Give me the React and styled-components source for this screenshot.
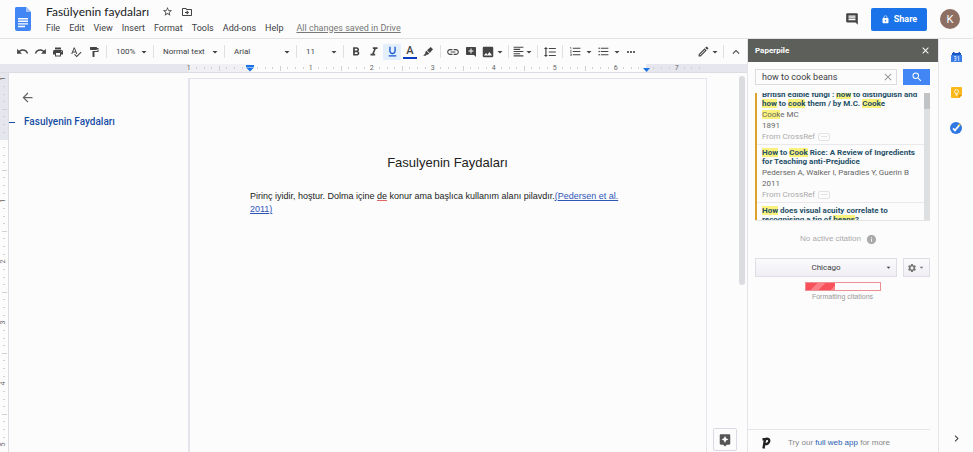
import { useEffect, useRef } from "react";
import styled, { createGlobalStyle } from "styled-components";
import {
  MdAddComment,
  MdArrowBack,
  MdArrowDropDown,
  MdAssistant,
  MdChevronRight,
  MdClose,
  MdComment,
  MdFormatAlignLeft,
  MdFormatBold,
  MdFormatItalic,
  MdFormatLineSpacing,
  MdFormatListBulleted,
  MdFormatListNumbered,
  MdFormatPaint,
  MdFormatUnderlined,
  MdImage,
  MdInfo,
  MdKeyboardArrowUp,
  MdLink,
  MdLock,
  MdMoreHoriz,
  MdOutlineDriveFileMove,
  MdOutlineEdit,
  MdPrint,
  MdRedo,
  MdSearch,
  MdSettings,
  MdSpellcheck,
  MdStarBorder,
  MdUndo,
} from "react-icons/md";

const GlobalStyle = createGlobalStyle`
  * {
    box-sizing: border-box;
  }

  body {
    margin: 0;
    background: #fcfcfc;
    font-family: Roboto, "Liberation Sans", sans-serif;
    color: #3c4043;
  }

  button, input, select {
    margin: 0;
    padding: 0;
    border: 0;
    background: none;
    font: inherit;
    color: inherit;
  }

  svg {
    display: block;
    flex: none;
  }
`;

const Layout = styled.div`
  display: flex;
  flex-direction: column;
  height: 100vh;
  overflow: hidden;
`;

/* Header */

const Header = styled.header`
  display: flex;
  align-items: center;
  height: 39px;
  padding: 0 13px 0 14px;
  border-bottom: 1px solid #e3e3e6;
`;

const HeaderInfo = styled.div`
  flex: 1;
  padding-left: 14px;
`;

const TitleRow = styled.div`
  display: flex;
  align-items: center;
  gap: 8px;
  height: 18px;
`;

const FileName = styled.h1`
  margin: 0 5px 0 0;
  font-family: Lato, Roboto, sans-serif;
  font-size: 12px;
  font-weight: 400;
  line-height: 18px;
  color: #202124;
`;

const IconButton = styled.button`
  display: flex;
  align-items: center;
  justify-content: center;
  color: #444;
`;

const MenuRow = styled.nav`
  display: flex;
  align-items: center;
  gap: 9px;
  font-size: 9px;
  line-height: 15px;
`;

const SavedLink = styled.a`
  margin-left: 4px;
  color: #777;
`;

const ShareButton = styled.button`
  display: flex;
  align-items: center;
  justify-content: center;
  gap: 4px;
  width: 56px;
  height: 23px;
  margin: 0 13px 0 12px;
  border-radius: 2px;
  background: #1a73e8;
  color: #fff;
  font-size: 9px;
  font-weight: 700;
`;

const Avatar = styled.button`
  width: 20px;
  height: 20px;
  border-radius: 50%;
  background: #8d6e63;
  color: #fff;
  font-size: 11px;
`;

/* Workspace */

const Workspace = styled.div`
  display: flex;
  flex: 1;
  min-height: 0;
`;

const Editor = styled.main`
  position: relative;
  display: flex;
  flex: 1;
  flex-direction: column;
  min-width: 0;
`;

const Toolbar = styled.div`
  display: flex;
  align-items: center;
  height: 25px;
  padding: 0 2px 0 13px;
`;

const Tool = styled.button`
  display: flex;
  align-items: center;
  justify-content: center;
  width: ${(p) => p.$width || 18}px;
  height: 16px;
  color: ${(p) => (p.$active ? "#1558d6" : "#444")};
  background: ${(p) => (p.$active ? "#e3f0fb" : "none")};
`;

const Divider = styled.span`
  width: 1px;
  height: 13px;
  margin: 0 3px;
  background: #e0e0e3;
`;

const Spacer = styled.span`
  flex: 1;
`;

const Picker = styled.label`
  display: grid;
  align-items: center;
  justify-items: end;
  width: ${(p) => p.$width}px;
  font-size: 8px;

  select,
  svg {
    grid-area: 1 / 1;
  }

  select {
    width: 100%;
    height: 16px;
    padding-left: 6px;
    appearance: none;
  }

  svg {
    pointer-events: none;
  }
`;

const TextColor = styled.span`
  width: 14px;
  border-bottom: 2px solid #0b3cc1;
  font-size: 11px;
  font-weight: 500;
  line-height: 13px;
`;

/* Rulers */

const shade = "#e6e6ee";
const sheet = "#fcfcfc";

const Ruler = styled.div`
  display: flex;
  height: 9px;
  padding-left: 185px;
  overflow: hidden;
  background: ${shade};
  border-bottom: 1px solid #dcdce2;
`;

const SideRuler = styled.div`
  display: flex;
  flex: none;
  flex-direction: column;
  width: 9px;
  overflow: hidden;
  padding-top: 2px;
  background: ${shade};
  border-right: 1px solid #dcdce2;
`;

const Inch = styled.div`
  display: flex;
  flex: none;
  flex-direction: ${(p) => (p.$vertical ? "column" : "row")};
  width: ${(p) => (p.$vertical ? "auto" : "61px")};
  height: ${(p) => (p.$vertical ? "61px" : "auto")};
  background: ${(p) => p.$fill || sheet};
`;

const HalfInch = styled(Inch)`
  width: 30px;
`;

const Slot = styled.span`
  display: flex;
  flex: 1;
  align-items: center;
  justify-content: center;
  min-width: 0;
  min-height: 0;
  font-size: 7px;
  line-height: 7px;
  color: #666;

  b {
    font-weight: 400;
    transform: ${(p) => (p.$vertical ? "rotate(-90deg)" : "none")};
  }

  i {
    width: ${(p) => (p.$vertical ? p.$length : 1)}px;
    height: ${(p) => (p.$vertical ? 1 : p.$length)}px;
    background: #d0d0d6;
  }
`;

/* Document */

const Canvas = styled.div`
  display: flex;
  flex: 1;
  min-height: 0;
`;

const Outline = styled.aside`
  flex: none;
  width: 179px;
  padding-top: 17px;
`;

const BackButton = styled(IconButton)`
  margin-left: 11px;
  color: #666;
`;

const OutlineItem = styled.a`
  display: flex;
  align-items: center;
  gap: 9px;
  margin-top: 9px;
  color: #174ea6;
  font-size: 10px;
  font-weight: 500;
  line-height: 16px;
  text-decoration: none;

  &::before {
    content: "";
    width: 6px;
    height: 1px;
    background: #174ea6;
  }
`;

const Page = styled.article`
  flex: 0 1 519px;
  margin-top: 5px;
  padding: 74px 61px 0 60px;
  border: 1px solid #e4e4ec;
  border-width: 1px 1px 0 2px;
  font-family: "Liberation Sans", Arial, sans-serif;
  color: #222;
`;

const DocTitle = styled.h2`
  margin: 0;
  font-size: 13px;
  font-weight: 400;
  line-height: 20px;
  text-align: center;
`;

const Paragraph = styled.p`
  margin: 17px 0 0;
  font-size: 9px;
  line-height: 13px;

  a {
    color: #2f55b8;
  }

  u {
    text-decoration-color: #e06666;
  }
`;

const DocScroll = styled.div`
  width: 6px;
  height: 209px;
  margin: 3px 2px 0 auto;
  border-radius: 3px;
  background: #dadce0;
`;

const ExploreButton = styled(IconButton)`
  position: absolute;
  right: 10px;
  bottom: 1px;
  width: 24px;
  height: 23px;
  border: 1px solid #dadae2;
  border-radius: 2px;
  background: #fcfcfc;
  color: #555;
`;

/* Paperpile panel */

const Panel = styled.aside`
  display: flex;
  flex: none;
  flex-direction: column;
  width: 192px;
  border: 1px solid #e4e4ea;
  border-width: 0 1px;
  font-family: "Liberation Sans", Arial, sans-serif;
`;

const PanelHeader = styled.div`
  display: flex;
  align-items: center;
  justify-content: space-between;
  height: 23px;
  padding: 0 7px;
  background: #5d5f5b;
  color: #fff;
  font-family: Roboto, sans-serif;

  h2 {
    margin: 0;
    font-size: 8px;
    font-weight: 700;
  }

  button {
    color: #fff;
  }
`;

const PanelBody = styled.div`
  display: flex;
  flex: 1;
  flex-direction: column;
  padding: 7px 8px 0 7px;
`;

const SearchForm = styled.form`
  display: flex;
  gap: 6px;
`;

const SearchBox = styled.div`
  display: flex;
  flex: 1;
  align-items: center;
  height: 16px;
  padding: 0 2px 0 6px;
  border: 1px solid #dcdce0;
  font-family: Roboto, sans-serif;

  input {
    flex: 1;
    min-width: 0;
    font-size: 9px;
    outline: none;
  }

  button {
    color: #999;
  }
`;

const SearchButton = styled(IconButton)`
  width: 27px;
  background: #4285f4;
  color: #fff;
`;

const Results = styled.div`
  display: flex;
  height: 128px;
  margin-top: 8px;
  border-bottom: 1px solid #e4e4e4;
`;

const ResultList = styled.ul`
  flex: 1;
  min-width: 0;
  margin: 0;
  padding: 0;
  overflow: hidden;
  border-left: 2px solid #dba32c;
  list-style: none;
`;

const Result = styled.li`
  height: 58px;
  padding: 3px 0 0 5px;
  border-bottom: 1px solid #e9e9ec;
  font-family: Roboto, sans-serif;
  font-size: 8px;
  line-height: 11px;
  color: #666;
  white-space: nowrap;

  h3 {
    margin: 0 0 1px;
    font-size: 8px;
    line-height: 9px;
    color: #1f5068;
  }

  mark {
    background: #fbf27c;
    color: inherit;
  }
`;

const Source = styled.div`
  display: flex;
  align-items: center;
  gap: 3px;
  color: #aaa;

  button {
    width: 12px;
    height: 8px;
    border: 1px solid #e2e2e2;
    border-radius: 2px;
    line-height: 3px;
  }
`;

const ResultScroll = styled.div`
  width: 6px;
  background: #dddfe0;

  &::before {
    content: "";
    display: block;
    height: 16px;
    background: #c1c3c4;
  }
`;

const CitationStatus = styled.p`
  display: flex;
  align-items: center;
  justify-content: center;
  gap: 5px;
  margin: 12px 0 13px;
  padding-right: 8px;
  font-size: 8px;
  line-height: 12px;
  color: #aaa;
`;

const StyleRow = styled.div`
  display: flex;
  gap: 6px;
  font-family: Roboto, sans-serif;
`;

const StylePicker = styled(Picker)`
  flex: 1;
  height: 19px;
  border: 1px solid #e0dde4;
  background: linear-gradient(#fafafc, #f0eef4);

  select {
    padding: 0 8px 0 8px;
    text-align: center;
    text-align-last: center;
  }

  svg {
    margin-right: 3px;
  }
`;

const GearButton = styled(IconButton)`
  width: 27px;
  border: 1px solid #e0dde4;
  background: linear-gradient(#fafafc, #f0eef4);
  color: #777;
`;

const Progress = styled.div`
  width: 76px;
  height: 9px;
  margin: 5px auto 0;
  border: 1px solid #ee8f95;

  &::before {
    content: "";
    display: block;
    width: 40%;
    height: 100%;
    background: repeating-linear-gradient(
      135deg,
      #f7525c 0 8px,
      #fa7f86 8px 14px
    );
  }
`;

const ProgressLabel = styled.p`
  margin: 1px 0 0;
  font-size: 7px;
  line-height: 9px;
  text-align: center;
  color: #999;
`;

const PanelFooter = styled.footer`
  display: flex;
  align-items: center;
  gap: 17px;
  height: 23px;
  margin: 0 8px 0 0;
  padding: 3px 0 0 13px;
  border-top: 1px solid #e4e4ea;
  font-size: 8px;
  color: #888;

  a {
    color: #2a5db0;
    text-decoration: none;
  }
`;

const Rail = styled.nav`
  display: flex;
  flex: none;
  flex-direction: column;
  align-items: center;
  gap: 24px;
  width: 34px;
  padding: 13px 0 7px;
`;

const RailToggle = styled(IconButton)`
  margin-top: auto;
`;

const menus = ["File", "Edit", "View", "Insert", "Format", "Tools", "Add-ons", "Help"];
const inches = ["1", "", "1", "2", "3", "4", "5", "6"];
const sideInches = ["1", "", "1", "2", "3", "4", "5"];

// margins are tinted up to the middle of the slot that holds the marker
const inchFills = {
  0: `linear-gradient(to right, ${shade} 4px, #f0f0f5 4px)`,
  1: `linear-gradient(to right, #f0f0f5 4px, ${sheet} 4px)`,
  7: `linear-gradient(to right, ${sheet} 34px, ${shade} 34px)`,
};
const sideFills = {
  0: shade,
  1: `linear-gradient(${shade} 4px, ${sheet} 4px)`,
};

function DocsLogo() {
  return (
    <svg width="18" height="24" viewBox="0 0 18 24" aria-hidden="true">
      <path d="M2 0h10l5 5v17a2 2 0 0 1-2 2H3a2 2 0 0 1-2-2V2a2 2 0 0 1 1-2z" fill="#4285f4" />
      <path d="M12 0l5 5h-5z" fill="#a1c2fa" />
      <path d="M4 11h10v1.400H4zM4 13.600h10V15H4zM4 16.200h10v1.400H4zM4 18.800h7v1.400H4z" fill="#fff" />
    </svg>
  );
}

function HighlighterIcon() {
  return (
    <svg width="12" height="12" viewBox="0 0 12 12" fill="#444" aria-hidden="true">
      <path d="M8.600.900 11 3.300 7.800 7 5 4.200z" />
      <path d="M4.400 4.800 7.200 7.600 5.800 8.700 4.900 8.600 3.700 9.800H1.200L3.400 7.200 3.300 6.100z" />
    </svg>
  );
}

function CalendarIcon() {
  return (
    <svg width="11" height="11" viewBox="0 0 11 11" aria-hidden="true">
      <path d="M1 1h1V0h1.500v1h4V0H9v1h1v2H1z" fill="#1a56c4" />
      <path d="M0 3h11v7H0z" fill="#3b7de8" />
      <path
        d="M3 4.500h2v1.900H3.600M5 6.400v2.200H3M6.500 5 7.700 4.500V9"
        fill="none"
        stroke="#d8e6ff"
        strokeWidth=".8"
      />
    </svg>
  );
}

function KeepIcon() {
  return (
    <svg width="11" height="11" viewBox="0 0 11 11" aria-hidden="true">
      <path d="M1 0h9a1 1 0 0 1 1 1v7l-3 3H1a1 1 0 0 1-1-1V1a1 1 0 0 1 1-1z" fill="#fbb81b" />
      <path d="M11 8l-3 3V8z" fill="#e08f00" />
      <circle cx="5.500" cy="4.500" r="2" fill="none" stroke="#fff3cf" />
      <path d="M4.500 7h2v1.500h-2z" fill="#fff3cf" />
    </svg>
  );
}

function TasksIcon() {
  return (
    <svg width="12" height="12" viewBox="0 0 12 12" aria-hidden="true">
      <circle cx="6" cy="6" r="6" fill="#2f78e4" />
      <path d="M3 6.300 5 8.300 9.500 3" fill="none" stroke="#fff" strokeWidth="1.800" />
      <circle cx="9.600" cy="2.700" r="1" fill="#fbbc04" />
    </svg>
  );
}

function PaperpileLogo() {
  return (
    <svg width="10" height="14" viewBox="0 0 10 14" aria-hidden="true">
      <path
        d="M2.500 12.500 4 3.500C5.800 2.300 8.500 2.600 8.200 5.200 7.900 7.700 5.800 8.400 3.400 8M1.500 3.200h3"
        fill="none"
        stroke="#222"
        strokeWidth="2.400"
      />
    </svg>
  );
}

function IndentMarker() {
  return (
    <svg width="8" height="8" viewBox="0 0 8 8" aria-hidden="true">
      <path d="M0 1h8v2H0zM0 3.500h8L4 7.500z" fill="#1a73e8" />
    </svg>
  );
}

function RightMarker() {
  return (
    <svg width="7" height="8" viewBox="0 0 7 8" aria-hidden="true">
      <path d="M0 4h7L3.500 8z" fill="#1a73e8" />
    </svg>
  );
}

function Slots({ label, marker, rightMarker, vertical, count = 8 }) {
  return Array.from({ length: count }, (_, i) => (
    <Slot key={i} $vertical={vertical} $length={i === 4 ? 5 : 2}>
      {i === 0 && marker}
      {i === 4 && rightMarker}
      {i === 0 && !marker && label && <b>{label}</b>}
      {i > 0 && !(i === 4 && rightMarker) && <i />}
    </Slot>
  ));
}

function ToolPicker({ label, value, width }) {
  return (
    <Picker $width={width}>
      <select aria-label={label}>
        <option>{value}</option>
      </select>
      <MdArrowDropDown size={12} />
    </Picker>
  );
}

function DropTool({ label }) {
  return (
    <Tool $width={10} aria-label={label}>
      <MdArrowDropDown size={12} />
    </Tool>
  );
}

function EditorToolbar() {
  return (
    <Toolbar>
      <Tool aria-label="Undo"><MdUndo size={13} /></Tool>
      <Tool aria-label="Redo"><MdRedo size={13} /></Tool>
      <Tool aria-label="Print"><MdPrint size={12} /></Tool>
      <Tool aria-label="Spelling"><MdSpellcheck size={12} /></Tool>
      <Tool aria-label="Paint format"><MdFormatPaint size={12} /></Tool>
      <Divider />
      <ToolPicker label="Zoom" value="100%" width={40} />
      <Divider />
      <ToolPicker label="Styles" value="Normal text" width={64} />
      <Divider />
      <ToolPicker label="Font" value="Arial" width={65} />
      <Divider />
      <ToolPicker label="Font size" value="11" width={40} />
      <Divider />
      <Tool aria-label="Bold"><MdFormatBold size={14} /></Tool>
      <Tool aria-label="Italic"><MdFormatItalic size={14} /></Tool>
      <Tool aria-label="Underline" $active><MdFormatUnderlined size={13} /></Tool>
      <Tool aria-label="Text color"><TextColor>A</TextColor></Tool>
      <Tool aria-label="Highlight color"><HighlighterIcon /></Tool>
      <Divider />
      <Tool aria-label="Insert link"><MdLink size={14} /></Tool>
      <Tool aria-label="Add comment"><MdAddComment size={12} /></Tool>
      <Tool aria-label="Insert image" $width={15}><MdImage size={14} /></Tool>
      <DropTool label="Image options" />
      <Divider />
      <Tool aria-label="Align" $width={12}><MdFormatAlignLeft size={13} /></Tool>
      <DropTool label="Align options" />
      <Divider />
      <Tool aria-label="Line spacing"><MdFormatLineSpacing size={14} /></Tool>
      <Divider />
      <Tool aria-label="Numbered list"><MdFormatListNumbered size={13} /></Tool>
      <DropTool label="Numbered list options" />
      <Tool aria-label="Bulleted list"><MdFormatListBulleted size={13} /></Tool>
      <DropTool label="Bulleted list options" />
      <Tool aria-label="More"><MdMoreHoriz size={12} /></Tool>
      <Spacer />
      <Tool aria-label="Editing mode" $width={14}><MdOutlineEdit size={13} /></Tool>
      <DropTool label="Mode options" />
      <Divider />
      <Tool aria-label="Hide the menus"><MdKeyboardArrowUp size={14} /></Tool>
    </Toolbar>
  );
}

function SearchResults() {
  const list = useRef(null);

  // the list is already scrolled a little past the first title
  useEffect(() => {
    list.current.scrollTop = 6;
  }, []);

  return (
    <Results>
      <ResultList ref={list}>
        <Result>
          <h3>
            British edible fungi : <mark>how</mark> to distinguish and
            <br />
            <mark>how</mark> to <mark>cook</mark> them / by M.C. <mark>Cook</mark>e
          </h3>
          <div><mark>Cook</mark>e MC</div>
          <div>1891</div>
          <Source>From CrossRef <button aria-label="More about Cooke">···</button></Source>
        </Result>
        <Result>
          <h3>
            <mark>How</mark> to <mark>Cook</mark> Rice: A Review of Ingredients
            <br />
            for Teaching anti-Prejudice
          </h3>
          <div>Pedersen A, Walker I, Paradies Y, Guerin B</div>
          <div>2011</div>
          <Source>From CrossRef <button aria-label="More about Pedersen">···</button></Source>
        </Result>
        <Result>
          <h3>
            <mark>How</mark> does visual acuity correlate to
            <br />
            recognising a tin of <mark>beans</mark>?
          </h3>
        </Result>
      </ResultList>
      <ResultScroll />
    </Results>
  );
}

function PaperpilePanel() {
  return (
    <Panel>
      <PanelHeader>
        <h2>Paperpile</h2>
        <IconButton aria-label="Close"><MdClose size={11} /></IconButton>
      </PanelHeader>
      <PanelBody>
        <SearchForm>
          <SearchBox>
            <input aria-label="Search papers" defaultValue="how to cook beans" />
            <IconButton type="button" aria-label="Clear"><MdClose size={12} /></IconButton>
          </SearchBox>
          <SearchButton type="button" aria-label="Search"><MdSearch size={12} /></SearchButton>
        </SearchForm>
        <SearchResults />
        <CitationStatus>
          No active citation <MdInfo size={11} />
        </CitationStatus>
        <StyleRow>
          <StylePicker>
            <select aria-label="Citation style">
              <option>Chicago</option>
            </select>
            <MdArrowDropDown size={9} />
          </StylePicker>
          <GearButton aria-label="Settings">
            <MdSettings size={10} />
            <MdArrowDropDown size={9} />
          </GearButton>
        </StyleRow>
        <Progress role="progressbar" aria-label="Formatting citations" aria-valuenow={40} />
        <ProgressLabel>Formatting citations</ProgressLabel>
      </PanelBody>
      <PanelFooter>
        <PaperpileLogo />
        <span>Try our <a href="#app">full web app</a> for more</span>
      </PanelFooter>
    </Panel>
  );
}

function App() {
  return (
    <Layout>
      <GlobalStyle />
      <Header>
        <DocsLogo />
        <HeaderInfo>
          <TitleRow>
            <FileName>Fasülyenin faydaları</FileName>
            <IconButton aria-label="Star"><MdStarBorder size={11} /></IconButton>
            <IconButton aria-label="Move"><MdOutlineDriveFileMove size={12} /></IconButton>
          </TitleRow>
          <MenuRow>
            {menus.map((menu) => (
              <button key={menu}>{menu}</button>
            ))}
            <SavedLink href="#history">All changes saved in Drive</SavedLink>
          </MenuRow>
        </HeaderInfo>
        <IconButton aria-label="Comments"><MdComment size={14} /></IconButton>
        <ShareButton><MdLock size={9} />Share</ShareButton>
        <Avatar aria-label="Account">K</Avatar>
      </Header>
      <Workspace>
        <Editor>
          <EditorToolbar />
          <Ruler>
            {inches.map((label, i) => (
              <Inch key={i} $fill={inchFills[i]}>
                <Slots
                  label={label}
                  marker={i === 1 && <IndentMarker />}
                  rightMarker={i === 7 && <RightMarker />}
                />
              </Inch>
            ))}
            <HalfInch $fill={shade}>
              <Slots label="7" count={4} />
            </HalfInch>
          </Ruler>
          <Canvas>
            <SideRuler>
              {sideInches.map((label, i) => (
                <Inch key={i} $vertical $fill={sideFills[i]}>
                  <Slots label={label} vertical />
                </Inch>
              ))}
            </SideRuler>
            <Outline>
              <BackButton aria-label="Close outline"><MdArrowBack size={15} /></BackButton>
              <OutlineItem href="#top">Fasulyenin Faydaları</OutlineItem>
            </Outline>
            <Page>
              <DocTitle>Fasulyenin Faydaları</DocTitle>
              <Paragraph>
                Pirinç iyidir, hoştur. Dolma içine <u>de</u> konur ama başlıca
                kullanım alanı pilavdır.
                <a href="#cite">
                  (Pedersen et al.
                  <br />
                  2011)
                </a>
              </Paragraph>
            </Page>
            <DocScroll />
          </Canvas>
          <ExploreButton aria-label="Explore"><MdAssistant size={14} /></ExploreButton>
        </Editor>
        <PaperpilePanel />
        <Rail>
          <IconButton aria-label="Calendar"><CalendarIcon /></IconButton>
          <IconButton aria-label="Keep"><KeepIcon /></IconButton>
          <IconButton aria-label="Tasks"><TasksIcon /></IconButton>
          <RailToggle aria-label="Hide side panel"><MdChevronRight size={13} /></RailToggle>
        </Rail>
      </Workspace>
    </Layout>
  );
}

export default App;
